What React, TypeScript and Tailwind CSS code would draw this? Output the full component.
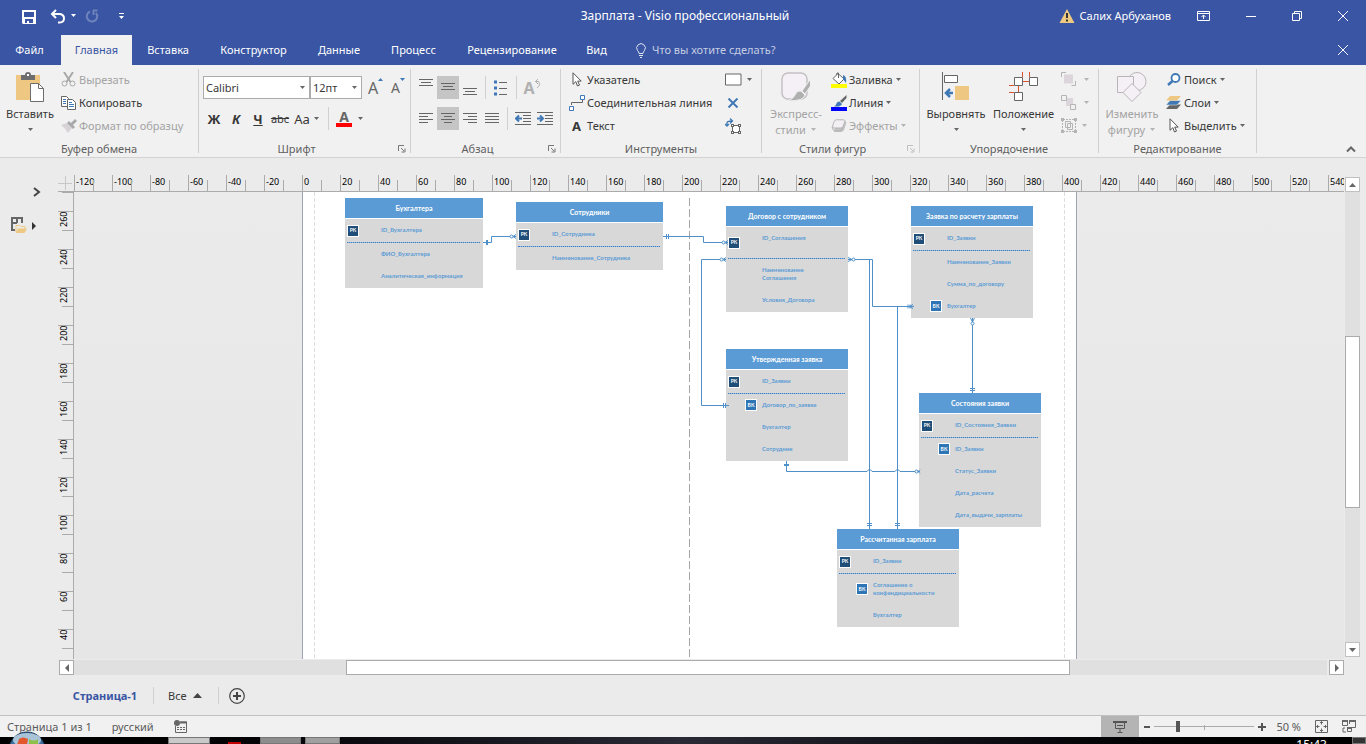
import type { ReactNode } from "react";
import { clsx } from "clsx";

type Row = { text: string; badge?: string; tall?: boolean };
type Entity = {
  title: string;
  x: number;
  y: number;
  wide?: string;
  pk: string;
  tallPk?: boolean;
  rows: Row[];
};

const TABS = [
  { name: "Файл", width: "w-[59px]" },
  { name: "Главная", width: "w-[71px]" },
  { name: "Вставка", width: "w-[72px]" },
  { name: "Конструктор", width: "w-[99px]" },
  { name: "Данные", width: "w-[72px]" },
  { name: "Процесс", width: "w-[77px]" },
  { name: "Рецензирование", width: "w-[120px]" },
  { name: "Вид", width: "w-[49px]" },
];

const ENTITIES: Entity[] = [
  {
    title: "Бухгалтера",
    x: 42,
    y: 6,
    wide: "w-[138px]",
    pk: "ID_Бухгалтера",
    rows: [{ text: "ФИО_Бухгалтера" }, { text: "Аналитическая_информация" }],
  },
  {
    title: "Сотрудники",
    x: 213,
    y: 10,
    wide: "w-[147px]",
    pk: "ID_Сотрудника",
    rows: [{ text: "Наименование_Сотрудника" }],
  },
  {
    title: "Договор с сотрудником",
    x: 423,
    y: 14,
    pk: "ID_Соглашения",
    tallPk: true,
    rows: [
      { text: "Наименование Соглашения", tall: true },
      { text: "Условия_Договора" },
    ],
  },
  {
    title: "Заявка по расчету зарплаты",
    x: 608,
    y: 14,
    pk: "ID_Заявки",
    rows: [
      { text: "Наименование_Заявки" },
      { text: "Сумма_по_договору" },
      { text: "Бухгалтер", badge: "ВК" },
    ],
  },
  {
    title: "Утвержденная заявка",
    x: 423,
    y: 157,
    pk: "ID_Заявки",
    rows: [
      { text: "Договор_по_заявке", badge: "ВК" },
      { text: "Бухгалтер" },
      { text: "Сотрудник" },
    ],
  },
  {
    title: "Состояния заявки",
    x: 616,
    y: 201,
    pk: "ID_Состояния_Заявки",
    rows: [
      { text: "ID_Заявки", badge: "ВК" },
      { text: "Статус_Заявки" },
      { text: "Дата_расчета" },
      { text: "Дата_выдачи_зарплаты" },
    ],
  },
  {
    title: "Рассчитанная зарплата",
    x: 534,
    y: 337,
    pk: "ID_Заявки",
    rows: [
      { text: "Соглашение о конфендициальности", badge: "ВК", tall: true },
      { text: "Бухгалтер" },
    ],
  },
];

const H_MARKS = Array.from({ length: 34 }, (_, i) => -120 + i * 20);
const V_MARKS = Array.from({ length: 12 }, (_, i) => 260 - i * 20);

export default function App() {
  return (
    <div className="flex h-screen flex-col overflow-hidden bg-[#ebebeb] font-['Noto_Sans',sans-serif] text-[11px] leading-4 text-[#383838]">
      <TitleBar />
      <TabBar />
      <Ribbon />
      <Workspace />
      <PageTabs />
      <StatusBar />
      <Taskbar />
    </div>
  );
}

/* ── Title and tabs ── */
function TitleBar() {
  return (
    <header className="flex h-[35px] shrink-0 items-start bg-[#3955a3] text-white">
      <div className="flex h-8 flex-1 items-center pl-[21px]">
        <button aria-label="Сохранить" className="mr-[14px]">
          <SaveIcon />
        </button>
        <button aria-label="Отменить" className="mr-1">
          <UndoIcon />
        </button>
        <Caret className="mr-2 text-white" />
        <button aria-label="Повторить" className="mr-[18px]">
          <RedoIcon />
        </button>
        <button aria-label="Настройка панели">
          <svg width="9" height="8" viewBox="0 0 9 8" fill="currentColor">
            <path d="M2 1h5v1H2zM2 4h5L4.500 7z" />
          </svg>
        </button>
      </div>
      <h1 className="flex h-8 items-center text-xs">
        Зарплата&nbsp;-&nbsp;Visio профессиональный
      </h1>
      <div className="flex h-8 flex-1 items-center justify-end pr-[17px]">
        <WarningIcon />
        <span className="ml-[5px] mr-[25px]">Салих Арбуханов</span>
        <button aria-label="Параметры ленты" className="mr-[34px]">
          <svg width="15" height="12" viewBox="0 0 15 12" fill="none" stroke="white">
            <path d="M1.500 1.500h12v9h-12zM1.500 3.500h12M7.500 9V5M5.500 7l2-2 2 2" />
          </svg>
        </button>
        <button aria-label="Свернуть" className="mr-[34px]">
          <svg width="12" height="12" viewBox="0 0 12 12" stroke="white">
            <path d="M1 6.500h10" />
          </svg>
        </button>
        <button aria-label="Свернуть в окно" className="mr-[34px]">
          <svg width="12" height="12" viewBox="0 0 12 12" fill="none" stroke="white">
            <path d="M1.500 3.500h7v7h-7zM3.500 3V1.500h7v7H9" />
          </svg>
        </button>
        <button aria-label="Закрыть">
          <CrossIcon />
        </button>
      </div>
    </header>
  );
}

function TabBar() {
  return (
    <nav className="flex h-[30px] shrink-0 items-stretch bg-[#3955a3] pr-[17px] text-white">
      {TABS.map((tab) => (
        <button
          key={tab.name}
          className={clsx(
            "text-center",
            tab.width,
            tab.name === "Файл" && "mr-[2px]",
            tab.name === "Главная" && "bg-[#f1f1f1] text-[#3955a3]",
          )}
        >
          {tab.name}
        </button>
      ))}
      <label className="flex flex-1 items-center gap-[5px] pl-[14px]">
        <BulbIcon />
        <input
          className="w-48 bg-transparent outline-none placeholder:text-[#c5cde4]"
          placeholder="Что вы хотите сделать?"
        />
      </label>
      <button aria-label="Закрыть документ">
        <CrossIcon />
      </button>
    </nav>
  );
}

/* ── Ribbon ── */
function Ribbon() {
  return (
    <section className="flex h-[93px] shrink-0 border-b border-[#d2d2d2] bg-[#f1f1f1]">
      <Group label="Буфер обмена" width="w-[198px]">
        <BigButton width="w-[60px]" lines={["Вставить"]} icon={<PasteIcon />} />
        <div>
          <Item icon={<CutIcon />} text="Вырезать" disabled />
          <Item icon={<CopyIcon />} text="Копировать" />
          <Item icon={<BrushIcon />} text="Формат по образцу" disabled />
        </div>
      </Group>

      <Group label="Шрифт" width="w-[211px]" launcher>
        <div className="flex flex-col gap-2 pl-1 pt-2">
          <div className="flex h-[23px] items-center">
            <Picker value="Calibri" label="Шрифт" width="w-[107px]" />
            <Picker value="12пт" label="Размер" width="w-[52px]" />
            <button aria-label="Увеличить размер" className="ml-[6px] flex w-[19px] items-start text-base leading-5 text-[#666666]">
              A
              <svg width="5" height="4" viewBox="0 0 5 4" fill="#3f78b5">
                <path d="M0 3l2.500-3L5 3z" />
              </svg>
            </button>
            <button aria-label="Уменьшить размер" className="ml-1 flex w-[19px] items-start text-sm leading-5 text-[#666666]">
              A
              <svg width="5" height="4" viewBox="0 0 5 4" fill="#3f78b5">
                <path d="M0 0h5L2.500 3z" />
              </svg>
            </button>
          </div>
          <div className="flex h-[23px] items-center text-[13px]">
            <button className="w-[22px] font-bold">Ж</button>
            <button className="w-[22px] font-bold italic">К</button>
            <button className="w-[22px] font-bold underline">Ч</button>
            <button className="w-[22px] text-[11px] line-through">abc</button>
            <button className="w-[22px]">Aa</button>
            <Caret className="text-[#666666]" />
            <Divider className="ml-2 mr-1" />
            <button className="flex w-[22px] flex-col items-center text-sm font-bold leading-3 text-[#666666]">
              A
              <span className="h-1 w-4 bg-[#ff0000]" />
            </button>
            <Caret className="ml-[2px] text-[#666666]" />
          </div>
        </div>
      </Group>

      <Group label="Абзац" width="w-[149px]" launcher>
        <div className="flex flex-col gap-2 pl-1 pt-2">
          <div className="flex h-[23px] items-stretch">
            <AlignButton label="По верхнему краю" d="M1 3.500h14M3 6.500h10M1 9.500h14" />
            <AlignButton label="По середине" d="M1 7.500h14M3 10.500h10M1 13.500h14" active />
            <AlignButton label="По нижнему краю" d="M1 12.500h14M3 15.500h10M1 18.500h14" />
            <Divider className="mx-1" />
            <button aria-label="Маркеры" className="flex w-[22px] items-center justify-center">
              <BulletsIcon />
            </button>
            <Divider className="mx-1" />
            <button
              aria-label="Повернуть текст"
              className="flex w-[22px] items-center justify-center text-base font-bold leading-5 text-[#b0b0b0]"
            >
              A
              <RotateIcon />
            </button>
          </div>
          <div className="flex h-[23px] items-stretch">
            <AlignButton label="По левому краю" d="M1 6.500h14M1 9.500h9M1 12.500h14M1 15.500h9" />
            <AlignButton label="По центру" d="M1 6.500h14M4 9.500h8M1 12.500h14M4 15.500h8" active />
            <AlignButton label="По правому краю" d="M1 6.500h14M6 9.500h9M1 12.500h14M6 15.500h9" />
            <AlignButton label="По ширине" d="M1 6.500h14M1 9.500h14M1 12.500h14M1 15.500h14" />
            <Divider className="mx-1" />
            <button aria-label="Уменьшить отступ" className="flex w-[22px] items-center justify-center">
              <IndentIcon left />
            </button>
            <button aria-label="Увеличить отступ" className="flex w-[22px] items-center justify-center">
              <IndentIcon />
            </button>
          </div>
        </div>
      </Group>

      <Group label="Инструменты" width="w-[200px]">
        <div className="pl-[7px]">
          <Item icon={<PointerIcon />} text="Указатель" />
          <Item icon={<ConnectorIcon />} text="Соединительная линия" />
          <Item icon={<span className="text-[13px] font-bold">A</span>} text="Текст" />
        </div>
        <div className="ml-auto pr-2">
          <button aria-label="Прямоугольник" className="flex h-[23px] items-center gap-1">
            <svg width="17" height="13" viewBox="0 0 17 13" fill="white" stroke="#666">
              <path d="M.5 1h15.500v11H.5z" />
            </svg>
            <Caret className="text-[#666666]" />
          </button>
          <button aria-label="Точка соединения" className="flex h-[23px] w-4 items-center justify-center">
            <svg width="12" height="10" viewBox="0 0 12 10" stroke="#3f78b5" strokeWidth="2">
              <path d="M1.500 .5l9 9M10.500 .5l-9 9" />
            </svg>
          </button>
          <button aria-label="Блок текста" className="flex h-[23px] items-center">
            <TextBlockIcon />
          </button>
        </div>
      </Group>

      <Group label="Стили фигур" width="w-[157px]" launcher faded>
        <BigButton
          width="w-[68px]"
          lines={["Экспресс-", "стили"]}
          icon={<QuickStyleIcon />}
          disabled
        />
        <div>
          <Item icon={<FillIcon />} text="Заливка" caret />
          <Item icon={<LineIcon />} text="Линия" caret />
          <Item icon={<EffectsIcon />} text="Эффекты" caret disabled />
        </div>
      </Group>

      <Group label="Упорядочение" width="w-[178px]">
        <BigButton width="w-[72px]" lines={["Выровнять"]} icon={<AlignShapesIcon />} />
        <BigButton width="w-[63px]" lines={["Положение"]} icon={<PositionIcon />} />
        <div className="ml-[6px] text-[#b4b4b4]">
          <button aria-label="На передний план" className="flex h-[23px] items-center gap-[6px]">
            <svg width="16" height="15" viewBox="0 0 16 15" fill="none" stroke="#b4b4b4">
              <path d="M3 2.500h9v9H3z" fill="#dcd6dc" stroke="none" />
              <path d="M.5 5V.5H5M10.500 13.500h4V9" />
            </svg>
            <Caret />
          </button>
          <button aria-label="На задний план" className="flex h-[23px] items-center gap-[6px]">
            <svg width="16" height="15" viewBox="0 0 16 15" fill="#f1f1f1" stroke="#b4b4b4">
              <path d="M5 3h7v8H5z" fill="#dcd6dc" stroke="none" />
              <path d="M.5 .5h5v5h-5zM9.500 9.500h5v5h-5z" />
            </svg>
            <Caret />
          </button>
          <button aria-label="Группировать" className="flex h-[23px] items-center gap-1">
            <svg width="16" height="15" viewBox="0 0 16 15" fill="none" stroke="#b4b4b4">
              <path d="M1.500 2v11M14.500 2v11M2 1.500h12M2 13.500h12" strokeDasharray="2 1" />
              <path d="M4.500 3.500h5v6h-5zM6.500 5.500h5v6h-5z" />
              <path d="M0 0h3v3H0zM13 0h3v3h-3zM0 12h3v3H0zM13 12h3v3h-3z" fill="#b4b4b4" stroke="none" />
            </svg>
            <Caret />
          </button>
        </div>
      </Group>

      <Group label="Редактирование" width="w-[157px]">
        <BigButton
          width="w-[66px]"
          lines={["Изменить", "фигуру"]}
          icon={<ChangeShapeIcon />}
          disabled
        />
        <div>
          <Item icon={<SearchIcon />} text="Поиск" caret />
          <Item icon={<LayersIcon />} text="Слои" caret />
          <Item icon={<PointerIcon />} text="Выделить" caret />
        </div>
      </Group>

      <button aria-label="Свернуть ленту" className="ml-auto mr-[10px] self-end pb-1">
        <svg width="10" height="7" viewBox="0 0 10 7" fill="none" stroke="#666" strokeWidth="2">
          <path d="M1 5.500l4-4 4 4" />
        </svg>
      </button>
    </section>
  );
}

function Group({
  label,
  width,
  launcher,
  faded,
  children,
}: {
  label: string;
  width: string;
  launcher?: boolean;
  faded?: boolean;
  children: ReactNode;
}) {
  return (
    <>
      <div className={clsx("flex shrink-0 flex-col whitespace-nowrap pt-[3px]", width)}>
        <div className="flex h-[73px] items-start">{children}</div>
        <div className="flex h-4 items-center text-[#5f5f5f]">
          <span className="flex-1 text-center">{label}</span>
          {launcher && (
            <button aria-label={`${label}: параметры`} className="mr-1 flex w-3 justify-end">
              <svg width="8" height="8" viewBox="0 0 8 8" fill="none" stroke={faded ? "#c0c0c0" : "#777"}>
                <path d="M.5 6V.5H6M3 3l3 3M7 3.500V7H3.500" />
              </svg>
            </button>
          )}
        </div>
      </div>
      <Divider className="my-1" />
    </>
  );
}

function BigButton({
  width,
  lines,
  icon,
  disabled,
}: {
  width: string;
  lines: string[];
  icon: ReactNode;
  disabled?: boolean;
}) {
  return (
    <button className={clsx("flex shrink-0 flex-col items-center pt-1", width, disabled && "text-[#a3a3a3]")}>
      <span className="flex h-[34px] items-start">{icon}</span>
      <span>{lines[0]}</span>
      <span className="flex h-4 items-center gap-1">
        {lines[1]}
        <Caret className={disabled ? "text-[#b4b4b4]" : "text-[#666666]"} />
      </span>
    </button>
  );
}

function Item({
  icon,
  text,
  caret,
  disabled,
}: {
  icon: ReactNode;
  text: string;
  caret?: boolean;
  disabled?: boolean;
}) {
  return (
    <button className={clsx("flex h-[23px] items-center", disabled && "text-[#a3a3a3]")}>
      <span className="mr-[2px] flex w-[17px] justify-center">{icon}</span>
      {text}
      {caret && <Caret className={clsx("ml-[2px]", disabled ? "text-[#b4b4b4]" : "text-[#666666]")} />}
    </button>
  );
}

function Picker({ value, label, width }: { value: string; label: string; width: string }) {
  return (
    <div className={clsx("relative h-[23px]", width)}>
      <select
        aria-label={label}
        className="h-full w-full appearance-none border border-[#ababab] bg-white pl-[2px] outline-none"
      >
        <option>{value}</option>
      </select>
      <Caret className="pointer-events-none absolute right-1 top-[10px] text-[#666666]" />
    </div>
  );
}

function AlignButton({ label, d, active }: { label: string; d: string; active?: boolean }) {
  return (
    <button
      aria-label={label}
      className={clsx("flex w-[22px] items-center justify-center", active && "bg-[#c5c5c5]")}
    >
      <svg width="16" height="23" viewBox="0 0 16 23" stroke="#666">
        <path d={d} />
      </svg>
    </button>
  );
}

function Divider({ className }: { className?: string }) {
  return <div className={clsx("w-px shrink-0 self-stretch bg-[#d0d0d0]", className)} />;
}

function Caret({ className }: { className?: string }) {
  return (
    <svg width="7" height="4" viewBox="0 0 7 4" fill="currentColor" className={clsx("shrink-0", className)}>
      <path d="M1 0h5L3.500 3z" />
    </svg>
  );
}

/* ── Drawing area ── */
function Workspace() {
  return (
    <main className="grid min-h-0 flex-1 grid-cols-[58px_16px_1fr_22px] grid-rows-[17px_1fr_17px] pt-[17px]">
      <aside className="row-span-3 flex flex-col items-end gap-5 pr-[17px] pt-3">
        <button aria-label="Развернуть фигуры">
          <svg width="8" height="10" viewBox="0 0 8 10" fill="none" stroke="#444" strokeWidth="2">
            <path d="M1 1l5 4-5 4" />
          </svg>
        </button>
        <button aria-label="Наборы элементов" className="flex items-center gap-[5px] pr-1">
          <StencilIcon />
          <svg width="5" height="8" viewBox="0 0 5 8" fill="#333">
            <path d="M0 0l4 4-4 4z" />
          </svg>
        </button>
      </aside>

      <div className="border-b border-[#ababab]">
        <svg width="16" height="16" viewBox="0 0 16 16" stroke="#c8c8c8">
          <path d="M0 8.500h14M7.500 1v14" />
        </svg>
      </div>

      <div className="flex overflow-hidden border-b border-[#ababab] text-[9px] leading-[14px] text-black">
        {H_MARKS.map((mark) => (
          <div key={mark} className="flex w-[38px] shrink-0 items-end border-l border-[#ababab]">
            <span className="w-[18px] self-start whitespace-nowrap pl-px">{mark}</span>
            <span className="h-[11px] w-[19px] border-l border-[#ababab]" />
          </div>
        ))}
      </div>

      <VerticalScroll />

      <div className="flex flex-col overflow-hidden border-r border-[#ababab] text-[9px] leading-3 text-black">
        <div className="ml-1 h-[19px] shrink-0 border-t border-[#ababab]" />
        {V_MARKS.map((mark) => (
          <div key={mark} className="flex h-[38px] shrink-0 flex-col border-t border-[#ababab]">
            <span className="h-[18px] w-3 rotate-180 text-right [writing-mode:vertical-rl]">{mark}</span>
            <span className="ml-1 flex-1 border-t border-[#ababab]" />
          </div>
        ))}
      </div>

      <div className="overflow-hidden bg-linear-to-b from-[#ebebeb] to-[#e6e6e6]">
        <DrawingPage />
      </div>

      <HorizontalScroll />
    </main>
  );
}

function VerticalScroll() {
  return (
    <div className="row-span-2 flex flex-col pb-[2px] pl-px pr-[6px] pt-[2px]">
      <button aria-label="Вверх" className="flex h-[15px] items-center justify-center border border-[#c0c0c0] bg-white">
        <WideCaret className="rotate-180" />
      </button>
      <div className="grow-[145] basis-0 bg-[#e0e0e0]" />
      <div className="grow-[170] basis-0 border border-[#ababab] bg-white" />
      <div className="grow-[135] basis-0 bg-[#e0e0e0]" />
      <button aria-label="Вниз" className="flex h-[15px] items-center justify-center border border-[#c0c0c0] bg-white">
        <WideCaret />
      </button>
    </div>
  );
}

function WideCaret({ className }: { className?: string }) {
  return (
    <svg width="7" height="4" viewBox="0 0 7 4" fill="#666" className={className}>
      <path d="M0 0h7L3.500 4z" />
    </svg>
  );
}

function HorizontalScroll() {
  return (
    <div className="col-span-2 flex py-px">
      <button
        aria-label="Влево"
        className="ml-px flex w-[15px] items-center justify-center border border-[#ababab] bg-white"
      >
        <svg width="4" height="8" viewBox="0 0 4 8" fill="#666">
          <path d="M4 0v8L0 4z" />
        </svg>
      </button>
      <div className="grow-[272] basis-0 bg-[#e0e0e0]" />
      <div className="grow-[724] basis-0 border border-[#ababab] bg-white" />
      <div className="mr-[2px] grow-[257] basis-0 bg-[#e0e0e0]" />
      <button aria-label="Вправо" className="flex w-[15px] items-center justify-center border border-[#ababab] bg-white">
        <svg width="4" height="8" viewBox="0 0 4 8" fill="#666">
          <path d="M0 0l4 4-4 4z" />
        </svg>
      </button>
    </div>
  );
}

function DrawingPage() {
  return (
    <div className="relative ml-[228px] h-full w-[775px] border-x border-[#9aa5b1] bg-white">
      {ENTITIES.map((entity) => (
        <EntityCard key={entity.title} entity={entity} />
      ))}
      <Connectors />
    </div>
  );
}

function EntityCard({ entity }: { entity: Entity }) {
  return (
    <div
      className={clsx(
        "absolute font-[Lato,sans-serif] text-[6px] font-bold leading-[8px] text-[#5b9bd5]",
        entity.wide ?? "w-[122px]",
      )}
      style={{ left: entity.x, top: entity.y }}
    >
      <div className="mb-px flex h-5 items-center justify-center bg-[#5b9bd5] text-[7px] text-white">
        {entity.title}
      </div>
      <div className="bg-[#d8d8d8] pb-px">
        <div className={clsx("flex items-center pl-[2px]", entity.tallPk ? "h-[31px]" : "h-[23px]")}>
          <Badge text="РК" className="bg-[#1f4e79]" />
          <span className="ml-[22px] flex h-[22px] items-center self-start">{entity.pk}</span>
        </div>
        <div className="ml-[2px] mr-[3px] border-t border-dotted border-[#2f7fcc] bg-[#9dbcdc]" />
        {entity.rows.map((row) => (
          <div key={row.text} className={clsx("flex items-center", row.tall ? "h-[30px]" : "h-[22px]")}>
            <span className="flex w-9 pl-[19px]">
              {row.badge && <Badge text={row.badge} className="bg-[#2e75b6]" />}
            </span>
            <span className="w-[64px]">{row.text}</span>
          </div>
        ))}
      </div>
    </div>
  );
}

function Badge({ text, className }: { text: string; className: string }) {
  return (
    <span
      className={clsx(
        "flex size-3 shrink-0 items-center justify-center border border-white text-[5px] leading-none text-white",
        className,
      )}
    >
      {text}
    </span>
  );
}

function Connectors() {
  return (
    <svg
      className="pointer-events-none absolute left-0 top-0"
      width="773"
      height="467"
      viewBox="303 192 773 467"
      fill="none"
      stroke="#5090c8"
    >
      {/* page breaks and margins */}
      <path d="M314.500 192v467M1064.500 192v467" stroke="#dcdcdc" strokeDasharray="4 2" />
      <path d="M689.500 198v461" stroke="#a6a6a6" strokeDasharray="8 3" />

      <path d="M483 242.500h8.500v-6H516" />
      <path d="M663 236.500h40.500v6H728" />
      <path d="M726 259.500h-24.500v146H729" />
      <path d="M848 259.500h24.500v47H914M869.500 259.500V529M897.500 306.500V529" />
      <path d="M972.500 318v75" />
      <path d="M786.500 461v10.500H867q2.500-4 5 0H895q2.500-4 5 0H920" />

      {/* line ends */}
      <path d="M486.500 240v5M487.500 240v5M666.500 234v5M668.500 234v5M723.500 403v5M725.500 403v5" />
      <path d="M784 464.500h5M784 465.500h5M970 388.500h5M970 390.500h5" />
      <path d="M867 523.500h5M867 525.500h5M895 523.500h5M895 525.500h5" />
      <g fill="white">
        <circle cx="511.500" cy="236.500" r="1.500" />
        <circle cx="723.500" cy="242.500" r="1.500" />
        <circle cx="721.500" cy="259.500" r="1.500" />
        <circle cx="853.500" cy="259.500" r="1.500" />
        <circle cx="972.500" cy="323.500" r="1.500" />
        <circle cx="916.500" cy="471.500" r="1.500" />
      </g>
      <path d="M516 234.500l-3 2 3 2M728 240.500l-3 2 3 2M726 257.500l-3 2 3 2M848 257.500l4 2-4 2M920 469.500l-2 2 2 2M970.500 318l2 4 2-4" />
      <path d="M908 304.500v4M910 304.500v4M913 304.500l-4 2 4 2" />
    </svg>
  );
}

/* ── Bottom bars ── */
function PageTabs() {
  return (
    <div className="flex h-[39px] shrink-0 items-center pl-[72px]">
      <button className="w-[66px] whitespace-nowrap font-bold text-[#3955a3]">Страница-1</button>
      <Divider className="my-[11px] ml-[15px] mr-[14px]" />
      <button className="flex items-center gap-[6px]">
        Все
        <svg width="9" height="5" viewBox="0 0 9 5" fill="#444">
          <path d="M4.500 0L9 5H0z" />
        </svg>
      </button>
      <Divider className="my-[11px] ml-4 mr-[10px]" />
      <button aria-label="Вставить страницу">
        <svg width="16" height="16" viewBox="0 0 16 16" fill="none" stroke="#444">
          <circle cx="8" cy="8" r="7.300" strokeWidth="1.200" />
          <path d="M8 4v8M4 8h8" strokeWidth="2" />
        </svg>
      </button>
    </div>
  );
}

function StatusBar() {
  return (
    <footer className="flex h-[22px] shrink-0 items-center border-t border-[#c0c0c0] bg-[#f1f1f1] pl-[7px] pr-[10px] text-[#5a5a5a]">
      <span className="mr-5">Страница 1 из 1</span>
      <span className="mr-5">русский</span>
      <MacroIcon />
      <button aria-label="Режим презентации" className="ml-auto flex h-full w-[38px] items-center justify-center bg-[#b4b4b4]">
        <svg width="14" height="12" viewBox="0 0 14 12" fill="none" stroke="#555">
          <path d="M0 1h14" strokeWidth="2" />
          <path d="M2.500 2v5.500h9V2M4 4.500h6M7 8v3M4.500 11.500h5" />
        </svg>
      </button>
      <button aria-label="Уменьшить" className="ml-[5px]">
        <svg width="6" height="6" viewBox="0 0 6 6" stroke="#555" strokeWidth="2">
          <path d="M0 3h6" />
        </svg>
      </button>
      <span className="relative mx-1 flex h-4 w-[100px] items-center">
        <span className="absolute left-[50px] top-[6px] h-[5px] w-px bg-[#ababab]" />
        <input
          type="range"
          aria-label="Масштаб"
          min={0}
          max={100}
          defaultValue={23}
          className="relative h-px w-full appearance-none bg-[#ababab] outline-none [&::-webkit-slider-thumb]:h-[11px] [&::-webkit-slider-thumb]:w-1 [&::-webkit-slider-thumb]:appearance-none [&::-webkit-slider-thumb]:bg-[#555555]"
        />
      </span>
      <button aria-label="Увеличить">
        <svg width="8" height="8" viewBox="0 0 8 8" stroke="#555" strokeWidth="2">
          <path d="M0 4h8M4 0v8" />
        </svg>
      </button>
      <button className="ml-[10px] mr-[14px]">50 %</button>
      <button aria-label="Вписать в окно" className="mr-[14px]">
        <svg width="13" height="13" viewBox="0 0 13 13" fill="none" stroke="#666">
          <path d="M.5 .5h12v12H.5z" />
          <path d="M6.500 1.500v3M5 3l1.500-1.500L8 3M6.500 11.500v-3M5 10l1.500 1.500L8 10M1.500 6.500h3M3 5L1.500 6.500 3 8M11.500 6.500h-3M10 5l1.500 1.500L10 8" />
        </svg>
      </button>
      <button aria-label="Переключить окна">
        <svg width="14" height="13" viewBox="0 0 14 13" fill="none" stroke="#666">
          <path d="M.5 5.500v-4h5v4zM7.500 4V1.500h6v6H9M3 8H1v4h3M5.500 7.500h4v4h-4z" />
          <path d="M0 1h6M7 1h7M5 8h5" strokeWidth="2" />
        </svg>
      </button>
    </footer>
  );
}

function Taskbar() {
  return (
    <div className="relative flex h-[7px] shrink-0 bg-linear-to-r from-black via-[#2a2a36] to-black pl-[168px]">
      <svg className="absolute -top-[6px] left-[9px]" width="36" height="13" viewBox="0 0 36 13">
        <circle cx="18" cy="19" r="18" fill="#3d6f9c" stroke="#1b3a57" />
        <ellipse cx="18" cy="9" rx="14" ry="7" fill="#a9c4d8" />
        <path d="M10 8q4-3 9 0l-1 6H8z" fill="#e2572b" />
        <path d="M20 8q5 3 9 0v6h-9z" fill="#8fc04a" />
      </svg>
      <span className="mr-[18px] w-[42px] border border-[#777777] bg-[#c9c9c9]" />
      <span className="mr-[19px] mt-[5px] w-[13px] bg-[#c00000]" />
      <span className="mr-1 w-[41px] border border-[#777777] bg-[#8d8d8d]" />
      <span className="w-[35px] border border-[#777777] bg-[#a0a0a0]" />
      <time className="ml-auto mr-[25px] text-xs leading-4 text-white">15:43</time>
      <span className="w-[14px] border border-[#777777] bg-[#333333]" />
    </div>
  );
}

/* ── Icons ── */
function CrossIcon() {
  return (
    <svg width="12" height="12" viewBox="0 0 12 12" stroke="white">
      <path d="M1 1l10 10M11 1L1 11" />
    </svg>
  );
}
function SaveIcon() {
  return (
    <svg width="15" height="15" viewBox="0 0 15 15" fill="white">
      <path fillRule="evenodd" d="M1 1h14v14H2l-1-1zM3 3v5h10V3zM4 10v4h2v-2h2v2h4v-4z" />
    </svg>
  );
}
function UndoIcon() {
  return (
    <svg width="16" height="15" viewBox="0 0 16 15" fill="none" stroke="white" strokeWidth="2">
      <path d="M6 1L2 5l4 4M2 5h7q5 0 5 4.500T8 13.500" />
    </svg>
  );
}
function RedoIcon() {
  return (
    <svg width="14" height="14" viewBox="0 0 14 14" fill="none" stroke="#6f84bd" strokeWidth="2">
      <path d="M5 2.500A5.200 5.200 0 1 0 11 4M8 1.500h4.500M8.500 1v5" />
    </svg>
  );
}
function WarningIcon() {
  return (
    <svg width="16" height="14" viewBox="0 0 16 14">
      <path d="M8 0l7.500 14H.5z" fill="#efc982" />
      <path d="M7 4h2v5H7zM7 10.500h2v2H7z" fill="#333" />
    </svg>
  );
}
function BulbIcon() {
  return (
    <svg width="12" height="15" viewBox="0 0 12 15" fill="none" stroke="#dfe4f1">
      <path d="M4 10.500Q4 9 2.500 7.500a4.300 4.300 0 1 1 7 0Q8 9 8 10.500zM4 12.500h4M5 14.500h2" />
    </svg>
  );
}
function PasteIcon() {
  return (
    <svg width="28" height="31" viewBox="0 0 28 31">
      <path d="M0 3h24v25H0z" fill="#eec882" />
      <path d="M5 3h4q0-3 3-3t3 3h4v5H5z" fill="#6d6d6d" />
      <path d="M11 2h2v2h-2z" fill="white" />
      <path d="M14.500 11.500h8l5 5v13h-13z" fill="white" stroke="#6d6d6d" />
      <path d="M22.500 11.500v5h5" fill="none" stroke="#6d6d6d" />
    </svg>
  );
}
function CutIcon() {
  return (
    <svg width="15" height="15" viewBox="0 0 15 15" fill="none" stroke="#a8a8a8">
      <path d="M3 0l6.500 10M12 0L5.500 10" strokeWidth="2" />
      <circle cx="3.500" cy="11.500" r="2.500" />
      <circle cx="11.500" cy="11.500" r="2.500" />
    </svg>
  );
}
function CopyIcon() {
  return (
    <svg width="16" height="14" viewBox="0 0 16 14" fill="white" stroke="#666">
      <path d="M.5 .5h5l2 2v8h-7z" />
      <path d="M2 3.500h3M2 5.500h3M2 7.500h3" stroke="#3f78b5" />
      <path d="M6.500 3.500h5l3 3v7h-8z" />
      <path d="M8 6.500h3M8 8.500h5M8 10.500h5" stroke="#3f78b5" />
    </svg>
  );
}
function BrushIcon() {
  return (
    <svg width="16" height="14" viewBox="0 0 16 14">
      <path d="M0 6l6-2 5 5-4 5q-3-5-7-8z" fill="#d6d2d6" />
      <path d="M6 4l2-2 6 6-2 2zM10 4l4-4 2 2-4 4z" fill="#a8a8a8" />
    </svg>
  );
}
function BulletsIcon() {
  return (
    <svg width="14" height="16" viewBox="0 0 14 16" stroke="#666">
      <path d="M5 2.500h8M5 8.500h8M5 14.500h8" />
      <path d="M0 2h3M0 8h3M0 14h3" stroke="#3f78b5" strokeWidth="3" />
    </svg>
  );
}
function RotateIcon() {
  return (
    <svg width="6" height="10" viewBox="0 0 6 10" fill="none" stroke="#b0b0b0" className="mb-2">
      <path d="M2 9q4-3 1.500-6.500H0M3 0L.5 2.500 3 5" />
    </svg>
  );
}
function IndentIcon({ left }: { left?: boolean }) {
  return (
    <svg width="16" height="14" viewBox="0 0 16 14" fill="none" stroke="#666">
      <path d="M0 .5h16M8 3.500h8M8 6.500h8M8 9.500h8M0 12.500h16" />
      <path d={left ? "M7 6.500H1M4 3.500l-3 3 3 3" : "M0 6.500h6M3 3.500l3 3-3 3"} stroke="#3f78b5" strokeWidth="2" />
    </svg>
  );
}
function PointerIcon() {
  return (
    <svg width="10" height="15" viewBox="0 0 10 15" fill="white" stroke="#555">
      <path d="M1 .8v11.500l2.800-2.600L5.500 14l2-.9-1.800-4H9.200z" />
    </svg>
  );
}
function ConnectorIcon() {
  return (
    <svg width="16" height="16" viewBox="0 0 16 16" fill="none" stroke="#666">
      <path d="M2.500 10V7.500h11V5" />
      <path d="M.5 11.500h4v4h-4zM11.500 .5h4v4h-4z" fill="white" stroke="#3f78b5" />
    </svg>
  );
}
function TextBlockIcon() {
  return (
    <svg width="16" height="16" viewBox="0 0 16 16" fill="none">
      <path d="M2 8V5q0-2 5-2M5 .5L7.500 3 5 5.500M0 6l2 2 2-2" stroke="#3f78b5" strokeWidth="1.300" />
      <path d="M7.500 7.500h7v7h-7z" fill="white" stroke="#666" />
      <path d="M6 6h3v3H6zM13 6h3v3h-3zM6 13h3v3H6zM13 13h3v3h-3z" fill="#666" />
      <path d="M7 7h1v1H7zM14 7h1v1h-1zM7 14h1v1H7zM14 14h1v1h-1z" fill="white" />
    </svg>
  );
}
function QuickStyleIcon() {
  return (
    <svg width="30" height="31" viewBox="0 0 30 31">
      <rect x="1" y="1" width="25" height="26" rx="6" fill="#f5f0f5" stroke="#c4c0c4" strokeWidth="1.500" />
      <path d="M29.500 7v7L24 22l-3-3z" fill="#b0b0b0" stroke="#f1f1f1" />
      <path d="M20 19l4 4q-1 6-17 6 5-2 7-6 2-5 6-4z" fill="#b0b0b0" stroke="#f1f1f1" />
    </svg>
  );
}
function FillIcon() {
  return (
    <svg width="16" height="16" viewBox="0 0 16 16">
      <path d="M7 1.500l6 5.500-5 5-6-5.500z" fill="white" stroke="#666" />
      <path d="M7.500 6V1q-2-1-2 2" fill="none" stroke="#666" />
      <path d="M12 3q4 1 3 8l-3-4z" fill="#3f78b5" />
      <path d="M0 12h16v4H0z" fill="#ffff00" />
    </svg>
  );
}
function LineIcon() {
  return (
    <svg width="16" height="16" viewBox="0 0 16 16">
      <path d="M15.500 0v3L11 8 9 6z" fill="#666" />
      <path d="M8.500 6.500l2.500 2.500q-1 3-8 2.500 2-1 2.500-3t3-2z" fill="#3f78b5" />
      <path d="M0 12h16v4H0z" fill="#0000ff" />
    </svg>
  );
}
function EffectsIcon() {
  return (
    <svg width="16" height="14" viewBox="0 0 16 14">
      <path d="M5 2h8q3 0 2 3l-2 6q-1 2-3 2H3z" fill="#c2c2c2" />
      <path d="M5.500 .8h7q2 0 1.300 2L12 7.500Q11.500 9 10 9H3Q1 9 1.600 7l1.600-4.500Q3.800 .8 5.500 .8z" fill="#f3f0f3" stroke="#b4b4b4" />
      <path d="M1 8q1 4 3 4h6l2-4" fill="none" stroke="#b4b4b4" />
    </svg>
  );
}
function AlignShapesIcon() {
  return (
    <svg width="28" height="29" viewBox="0 0 28 29">
      <path d="M.5 0v28" stroke="#666" />
      <path d="M2.500 3.500h13v7h-13z" fill="white" stroke="#666" />
      <path d="M13 14h14v14H13z" fill="#eec882" />
      <path d="M11 21H4M8 17l-4 4 4 4" fill="none" stroke="#3f78b5" strokeWidth="2.500" />
    </svg>
  );
}
function PositionIcon() {
  return (
    <svg width="29" height="29" viewBox="0 0 29 29">
      <path d="M13.500 0v5M20.500 0v5M0 13.500h5M0 20.500h5M13 9.500h9M9.500 13v8" stroke="#d9532c" />
      <path d="M5.500 5.500h8v8h-8zM20.500 5.500h8v8h-8zM5.500 20.500h8v8h-8z" fill="white" stroke="#666" />
    </svg>
  );
}
function ChangeShapeIcon() {
  return (
    <svg width="30" height="31" viewBox="0 0 30 31" fill="#f5f0f5" stroke="#b8b4b8">
      <circle cx="20" cy="9.500" r="9" />
      <path d="M.5 4.500h16v16H.5z" />
      <path d="M15 11.500l9 9-9 9-9-9z" />
    </svg>
  );
}
function SearchIcon() {
  return (
    <svg width="14" height="13" viewBox="0 0 14 13" fill="none" stroke="#3f78b5">
      <circle cx="8.500" cy="5" r="4" fill="white" strokeWidth="1.800" />
      <path d="M5.500 8L1 12" strokeWidth="2.500" />
    </svg>
  );
}
function LayersIcon() {
  return (
    <svg width="15" height="13" viewBox="0 0 15 13">
      <path d="M4 8.500h11L11 13H0z" fill="#666" />
      <path d="M4 4.500h11L11 9H0z" fill="#3f78b5" stroke="#f1f1f1" strokeWidth=".5" />
      <path d="M4 0h11l-4 4.500H0z" fill="#eec882" />
    </svg>
  );
}
function StencilIcon() {
  return (
    <svg width="16" height="17" viewBox="0 0 16 17" fill="none">
      <path d="M0 1h12M1 1v13M0 13h4M11 1v5M6 1v5M1 6h5" stroke="#666" strokeWidth="2" />
      <path d="M5 15V8.500h4l1 1h4V12" stroke="#eec882" />
      <path d="M4.500 16L7 11.500h9L13.500 16z" fill="#eec882" />
    </svg>
  );
}
function MacroIcon() {
  return (
    <svg width="14" height="13" viewBox="0 0 14 13" fill="none" stroke="#666">
      <path d="M1.500 6v6.500h11V2H6" />
      <path d="M6 2.500h7" strokeWidth="2" />
      <path d="M3 7.500h8M3 9.500h8" strokeDasharray="2 1" />
      <circle cx="3" cy="3" r="3" fill="#666" stroke="none" />
    </svg>
  );
}
